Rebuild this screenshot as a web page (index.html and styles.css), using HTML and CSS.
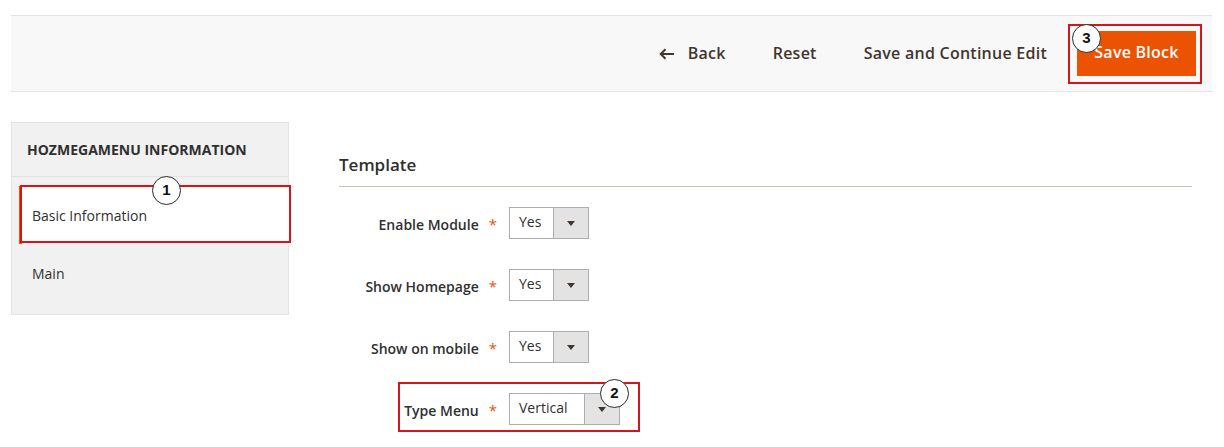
FILE: index.html
```html
<!DOCTYPE html>
<html>
<head>
<meta charset="utf-8">
<link rel="stylesheet" href="styles.css">
</head>
<body>
<div class="actions-bar">
  <button class="action back">
    <svg class="back-icon" width="16" height="12" viewBox="0 0 16 12"><path d="M15 6H2M6.5 1.2L1.7 6l4.8 4.8" fill="none" stroke="#41362f" stroke-width="2"/></svg>
    <span>Back</span>
  </button>
  <button class="action">Reset</button>
  <button class="action">Save and Continue Edit</button>
  <button class="action primary">Save Block
    <span class="annot-box box-3"></span>
    <span class="annot-num num-3">3</span>
  </button>
</div>

<div class="page">
  <aside class="sidebar">
    <div class="sidebar-title">HOZMEGAMENU INFORMATION</div>
    <ul class="tabs">
      <li class="tab active">Basic Information
        <span class="annot-box box-1"></span>
        <span class="annot-num num-1">1</span>
      </li>
      <li class="tab">Main</li>
    </ul>
  </aside>

  <main class="main">
    <h2 class="fieldset-title">Template</h2>
    <div class="field">
      <label class="field-label">Enable Module<span class="req">*</span></label>
      <div class="select"><span class="select-value">Yes</span><span class="select-arrow"></span></div>
    </div>
    <div class="field">
      <label class="field-label">Show Homepage<span class="req">*</span></label>
      <div class="select"><span class="select-value">Yes</span><span class="select-arrow"></span></div>
    </div>
    <div class="field">
      <label class="field-label">Show on mobile<span class="req">*</span></label>
      <div class="select"><span class="select-value">Yes</span><span class="select-arrow"></span></div>
    </div>
    <div class="field">
      <label class="field-label">Type Menu<span class="req">*</span></label>
      <div class="select wide"><span class="select-value">Vertical</span><span class="select-arrow"></span></div>
      <span class="annot-box box-2"></span>
      <span class="annot-num num-2">2</span>
    </div>
  </main>
</div>
</body>
</html>
```

FILE: styles.css
```css
* { box-sizing: border-box; }

body {
  margin: 0;
  background: #fff;
  font-family: "Open Sans", "DejaVu Sans", sans-serif;
  color: #303030;
}

.actions-bar {
  margin: 15px 12px 0 11px;
  height: 77px;
  background: #f8f8f8;
  border-top: 1px solid #e3e3e3;
  border-bottom: 1px solid #e3e3e3;
  display: flex;
  justify-content: flex-end;
  align-items: center;
  gap: 13px;
  padding-right: 16px;
}

.action {
  position: relative;
  font-family: "Open Sans", sans-serif;
  font-size: 16px;
  font-weight: 600;
  letter-spacing: 0.25px;
  color: #41362f;
  background: transparent;
  border: 0;
  height: 45px;
  padding: 0 17px 2px;
  display: flex;
  align-items: center;
  cursor: pointer;
}

.back-icon { margin-right: 13px; margin-top: 2px; }

.action.primary {
  background: #eb5202;
  color: #fff;
  width: 119px;
  justify-content: center;
  margin-top: -1px;
  padding: 0 0 2px;
}

.annot-box {
  position: absolute;
  border: 2px solid #d7141c;
  pointer-events: none;
}

.annot-num {
  position: absolute;
  width: 29px;
  height: 29px;
  border-radius: 50%;
  border: 1.5px solid #2a2a2a;
  background: #fff;
  color: #111;
  font-family: "Liberation Sans", Arial, sans-serif;
  font-weight: 700;
  font-size: 15px;
  letter-spacing: 0;
  line-height: 26px;
  text-align: center;
}

.box-3 { left: -9px; top: -7px; width: 134px; height: 60px; }
.num-3 { left: -5px; top: -7px; }

.page {
  display: flex;
  gap: 50px;
  margin: 30px 32px 0 11px;
  align-items: flex-start;
}

.sidebar {
  width: 278px;
  background: #f1f1f1;
  border: 1px solid #e3e3e3;
  padding-bottom: 12px;
}

.sidebar-title {
  height: 54px;
  line-height: 54px;
  padding-left: 15px;
  font-size: 14px;
  font-weight: 700;
  color: #303030;
  border-bottom: 1px solid #e3e3e3;
}

.tabs {
  list-style: none;
  margin: 0;
  padding: 9px 0 0;
}

.tab {
  position: relative;
  height: 58px;
  line-height: 60px;
  padding-left: 20px;
  font-size: 14px;
  color: #303030;
}

.tab.active {
  background: #fff;
  margin-left: 7px;
  border-left: 3px solid #eb5202;
  padding-left: 10px;
  margin-right: -1px;
}

.box-1 { left: -2px; top: -1px; width: 271px; height: 58px; }
.num-1 { left: 130px; top: -10px; }

.main {
  flex: 1;
}

.fieldset-title {
  margin: 31px 0 20px;
  font-size: 17px;
  font-weight: 600;
  line-height: 24px;
  color: #303030;
  padding-bottom: 9px;
  border-bottom: 1px solid #cac3b4;
}

.field {
  position: relative;
  display: flex;
  align-items: center;
  height: 32px;
  margin-bottom: 30px;
}

.field-label {
  width: 170px;
  padding-right: 12px;
  text-align: right;
  font-size: 14px;
  font-weight: 600;
  color: #303030;
  padding-top: 2px;
}

.req {
  color: #eb5202;
  font-size: 15px;
  font-weight: 400;
  margin-left: 10px;
}

.select {
  display: flex;
  width: 80px;
  height: 32px;
  border: 1px solid #adadad;
  background: #fff;
}

.select.wide { width: 111px; }

.select-value {
  flex: 1;
  padding-left: 9px;
  font-size: 14px;
  line-height: 28px;
  color: #303030;
}

.select-arrow {
  width: 35px;
  background: #e3e3e3;
  border-left: 1px solid #adadad;
  display: flex;
  align-items: center;
  justify-content: center;
}

.select-arrow::before {
  content: "";
  border-left: 4px solid transparent;
  border-right: 4px solid transparent;
  border-top: 5px solid #41362f;
}

.box-2 { left: 59px; top: -11px; width: 242px; height: 50px; }
.num-2 { left: 261px; top: -14px; }
```
